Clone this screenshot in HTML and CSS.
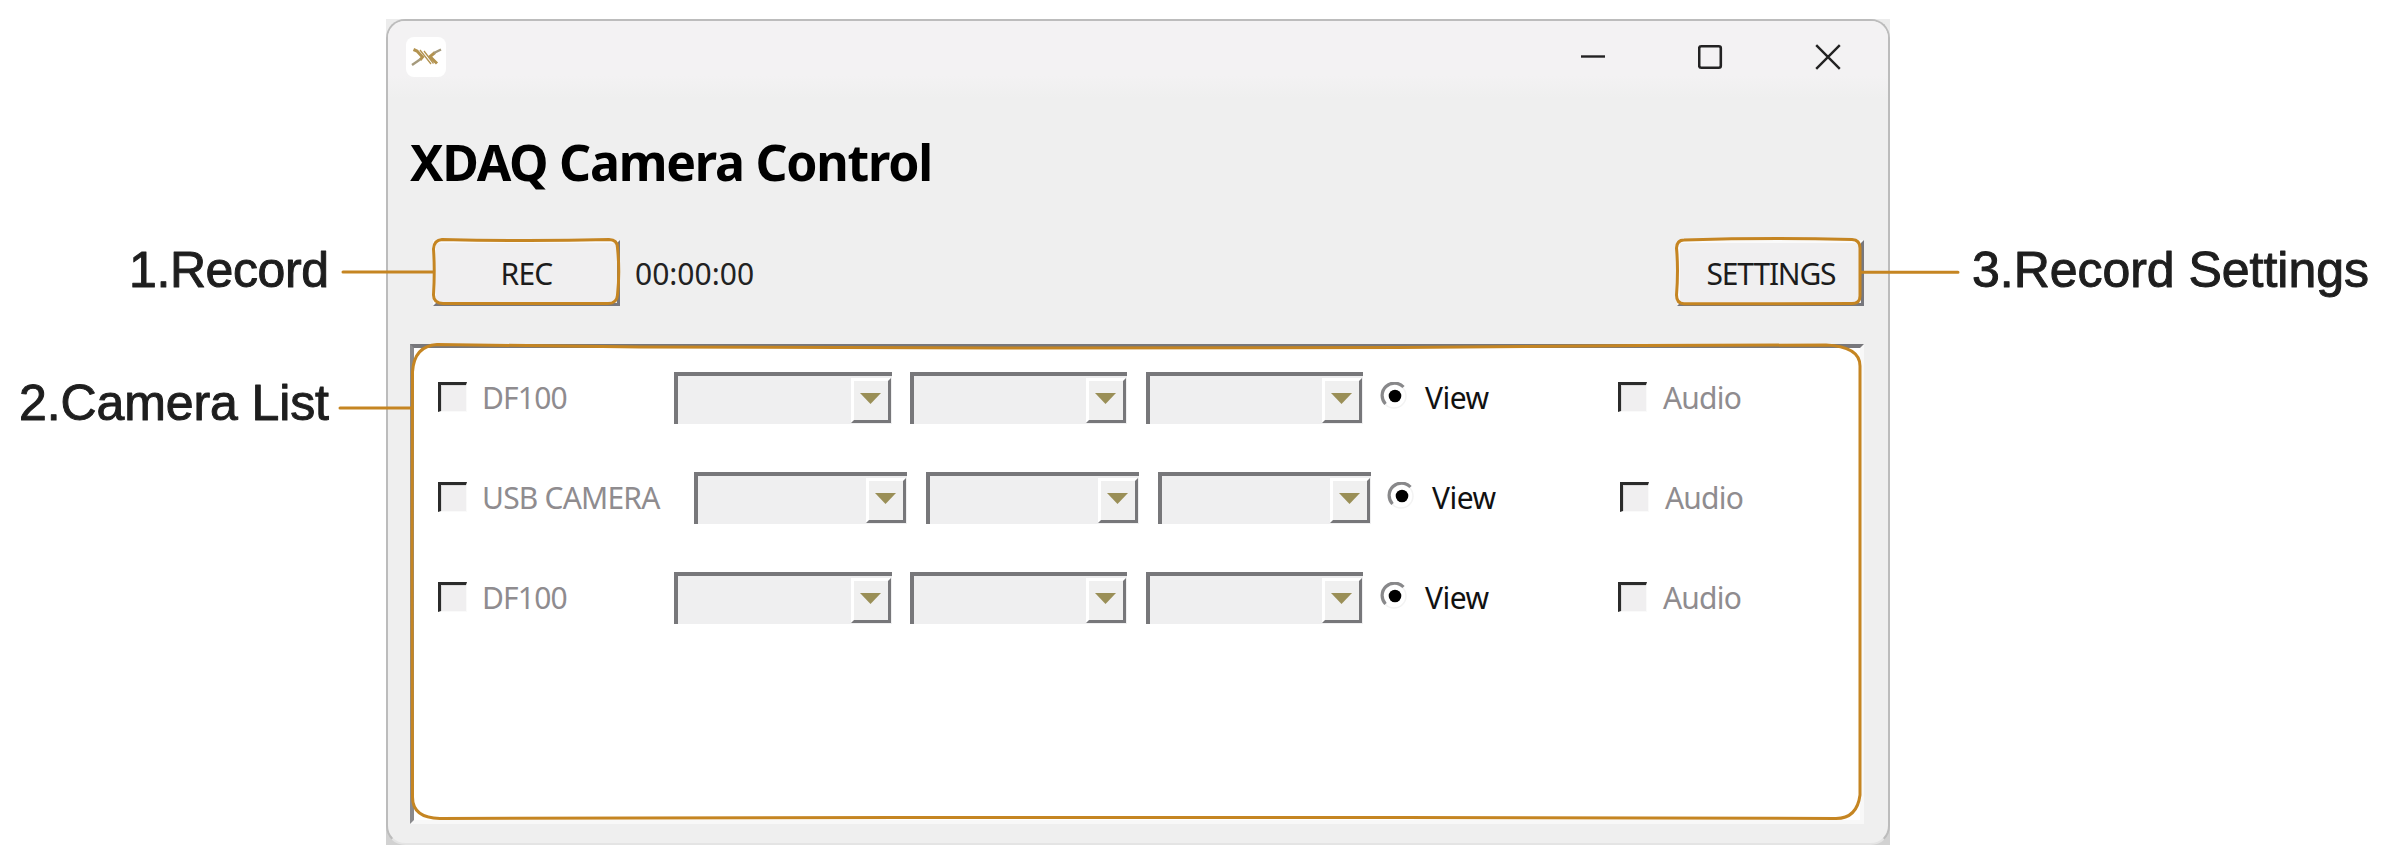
FILE: index.html
```html
<!DOCTYPE html>
<html lang="en">
<head>
<meta charset="utf-8">
<title>XDAQ Camera Control</title>
<link rel="stylesheet" href="styles.css">
</head>
<body>
<div class="page">
  <aside class="notes notes-left">
    <svg class="note note-record" width="210" height="60"><text x="1" y="45.500" textLength="200" lengthAdjust="spacing">1.Record</text></svg>
    <svg class="note note-list" width="326" height="60"><text x="1" y="46" textLength="310" lengthAdjust="spacing">2.Camera List</text></svg>
  </aside>

  <main class="frame">
    <div class="window">
      <header class="titlebar">
        <div class="app-icon">
          <svg width="40" height="40" viewBox="0 0 40 40" fill="none" stroke="#b39350">
            <path d="M7.500 12.500L11 14L16.500 20L14 23" stroke-width="3"/>
            <path d="M14 22.500L6 28" stroke="#a59a7c" stroke-width="2.400"/>
            <path d="M14 13L25 27M18 14L27.500 26.500" stroke-width="1.300"/>
            <path d="M29 15.500L24 19.500L31 26.500" stroke-width="3"/>
            <path d="M28 16L35 12.500" stroke="#a59a7c" stroke-width="2.400"/>
          </svg>
        </div>
        <div class="controls">
          <svg width="26" height="26"><path d="M1 12.500H25" stroke="#222" stroke-width="2.400"/></svg>
          <svg width="26" height="26"><rect x="1.200" y="2.200" width="21.600" height="21.600" rx="2" fill="none" stroke="#222" stroke-width="2.600"/></svg>
          <svg width="26" height="26"><path d="M1.200 1.200L24.800 24.800M24.800 1.200L1.200 24.800" stroke="#222" stroke-width="2.400"/></svg>
        </div>
      </header>
      <h1 class="title">XDAQ Camera Control</h1>
      <div class="toolbar">
        <button class="btn btn-rec">REC</button>
        <span class="clock">00:00:00</span>
        <button class="btn btn-settings">SETTINGS</button>
      </div>
      <section class="list">
        <div class="row">
          <i class="check"></i><span class="name">DF100</span>
          <div class="combo"><b class="drop"></b></div><div class="combo"><b class="drop"></b></div><div class="combo"><b class="drop"></b></div>
          <svg class="radio" width="28" height="28"><circle cx="14" cy="14" r="12" class="ring"/><path d="M5.500 22A12 12 0 0 1 23.500 5" class="arc"/><circle cx="15" cy="14" r="6.300"/></svg>
          <span class="view">View</span><i class="check"></i><span class="audio">Audio</span>
        </div>
        <div class="row row-wide">
          <i class="check"></i><span class="name">USB CAMERA</span>
          <div class="combo"><b class="drop"></b></div><div class="combo"><b class="drop"></b></div><div class="combo"><b class="drop"></b></div>
          <svg class="radio" width="28" height="28"><circle cx="14" cy="14" r="12" class="ring"/><path d="M5.500 22A12 12 0 0 1 23.500 5" class="arc"/><circle cx="15" cy="14" r="6.300"/></svg>
          <span class="view">View</span><i class="check"></i><span class="audio">Audio</span>
        </div>
        <div class="row">
          <i class="check"></i><span class="name">DF100</span>
          <div class="combo"><b class="drop"></b></div><div class="combo"><b class="drop"></b></div><div class="combo"><b class="drop"></b></div>
          <svg class="radio" width="28" height="28"><circle cx="14" cy="14" r="12" class="ring"/><path d="M5.500 22A12 12 0 0 1 23.500 5" class="arc"/><circle cx="15" cy="14" r="6.300"/></svg>
          <span class="view">View</span><i class="check"></i><span class="audio">Audio</span>
        </div>
      </section>
    </div>
  </main>

  <aside class="notes notes-right">
    <svg class="note note-settings" width="410" height="70"><text x="0" y="45.500" textLength="397" lengthAdjust="spacing">3.Record Settings</text></svg>
  </aside>

  <svg class="callouts" width="2390" height="866">
    <path d="M343 272H433M340 408H412M1861 272.300H1958"/>
    <path d="M442 239.500Q530 241.500 609 239.500Q617.500 239.500 617.500 248Q620 272 617.500 295Q617 303.500 608 303.500H443Q433.500 303 433.500 295Q435 270 433.500 249Q434 240 442 239.500Z"/>
    <path d="M1684 240Q1770 237.500 1852 239.500Q1860 240 1860 248V296Q1860 303.500 1852 303.500L1684 303.800Q1676.500 303.500 1676.500 295Q1678.500 270 1676.500 248Q1677 240 1684 240Z"/>
    <path d="M437 344.500L640 347L1000 348L1400 347.500L1640 345.500L1826 345Q1860 346.500 1860 366V795Q1857 818.500 1836 818.500L1400 817.500H900L440 818.500Q412.500 818 412.500 797L412 560L412.500 372Q414 346 437 344.500Z"/>
  </svg>
</div>
</body>
</html>
```
FILE: styles.css
```css
* { box-sizing: border-box; }
body { margin: 0; background: #fff; }
.page { position: relative; display: flex; width: 2390px; height: 866px; padding-top: 19px; overflow: hidden; font-family: "Noto Sans", "Open Sans", sans-serif; font-size: 30px; }

/* Callout labels beside the window */
.notes { display: flex; flex-direction: column; }
.notes-left { width: 386px; }
.notes-right { width: 500px; }
.note { display: block; flex: none; }
.note text { font-family: "Liberation Sans", Arial, sans-serif; font-size: 50px; fill: #1e1e1e; stroke: #1e1e1e; stroke-width: 1px; stroke-linejoin: round; }
.note-record { margin: 222px 0 0 128px; }
.note-list { margin: 73px 0 0 18px; }
.note-settings { margin: 222px 0 0 82px; }
.callouts { position: absolute; left: 0; top: 0; fill: none; stroke: #c58522; stroke-width: 3px; stroke-linecap: round; pointer-events: none; }

/* Window */
.frame { width: 1504px; height: 826px; background: linear-gradient(#ececec 50%, #d2d2d2 50%); }
.window { height: 100%; border: 2px solid #bcbcbc; border-bottom-color: #e4e4e4; border-radius: 19px; background: #efefef; }
.titlebar { display: flex; justify-content: space-between; align-items: flex-start; height: 78px; padding: 16px 47px 0 18px; border-radius: 17px 17px 0 0; background: linear-gradient(#f3f2f3 70%, #efefef); }
.app-icon { width: 40px; height: 40px; border-radius: 8px; background: #fff; }
.app-icon svg { display: block; }
.controls { display: flex; gap: 91.500px; padding-top: 7px; }
.controls svg { display: block; }
.title { margin: 29px 0 0 22px; height: 68px; line-height: 68px; font-size: 50px; font-weight: 700; letter-spacing: -1.230px; color: #000; white-space: nowrap; }
.toolbar { display: flex; align-items: center; height: 66px; margin: 44px 24px 0 45px; color: #222; }
.btn { width: 187px; height: 66px; padding: 1px 0 0; border: solid #fafafa; border-width: 3px; border-right-color: #77777d; border-bottom-color: #77777d; background: #f0eff0; font: inherit; color: #1c1c1c; }
.btn-rec { letter-spacing: -.8px; }
.btn-settings { margin-left: auto; padding-left: 1px; letter-spacing: -1.200px; }
.clock { margin: 1px 0 0 15px; }

/* Camera list */
.list { width: 1454px; height: 480px; margin: 38px 0 0 22px; padding: 24px 0 0 24px; border: 4px solid; border-color: #77777b #f8f8f8 #f8f8f8 #8a8a8d; background: #fff; }
.row { display: grid; grid-template-columns: 44px 192px 236px 236px 234px 45px 193px 45px 100px; height: 52px; margin-bottom: 48px; align-items: center; white-space: nowrap; line-height: 52px; }
.row-wide { grid-template-columns: 44px 212px 232px 232px 229px 45px 188px 45px 100px; }
.name, .audio { color: #8f8c8f; letter-spacing: -.800px; }
.view { color: #111; letter-spacing: -.500px; }
.check { width: 29px; height: 30px; margin-top: -2px; border: solid #fafafa; border-width: 3px 1px 1px 3px; border-top-color: #2b2b2b; border-left-color: #2b2b2b; background: #f0eff0; box-shadow: inset 1px 1px #aaa4; }
.combo { width: 218px; height: 52px; padding: 2px 1px 1px; border: solid #77777a; border-width: 4px 0 0 4px; background: #efeff0; display: flex; justify-content: flex-end; }
.combo + .combo { width: 217px; }
.row-wide .combo { width: 213px; }
.drop { width: 40px; height: 45px; border: 3px solid; border-color: #fff #77777a #77777a #fff; background: #f0f0f0; padding: 12px 0 0 6px; }
.drop::before { content: ""; display: block; width: 21px; height: 11px; background: #9a8f57; clip-path: polygon(0 0, 100% 0, 50% 100%); }
.radio { display: block; margin-top: -4px; }
.radio .ring { fill: #fff; stroke: #f3f3f3; stroke-width: 1.500px; }
.radio .arc { fill: none; stroke: #88888a; stroke-width: 3.200px; }
```
